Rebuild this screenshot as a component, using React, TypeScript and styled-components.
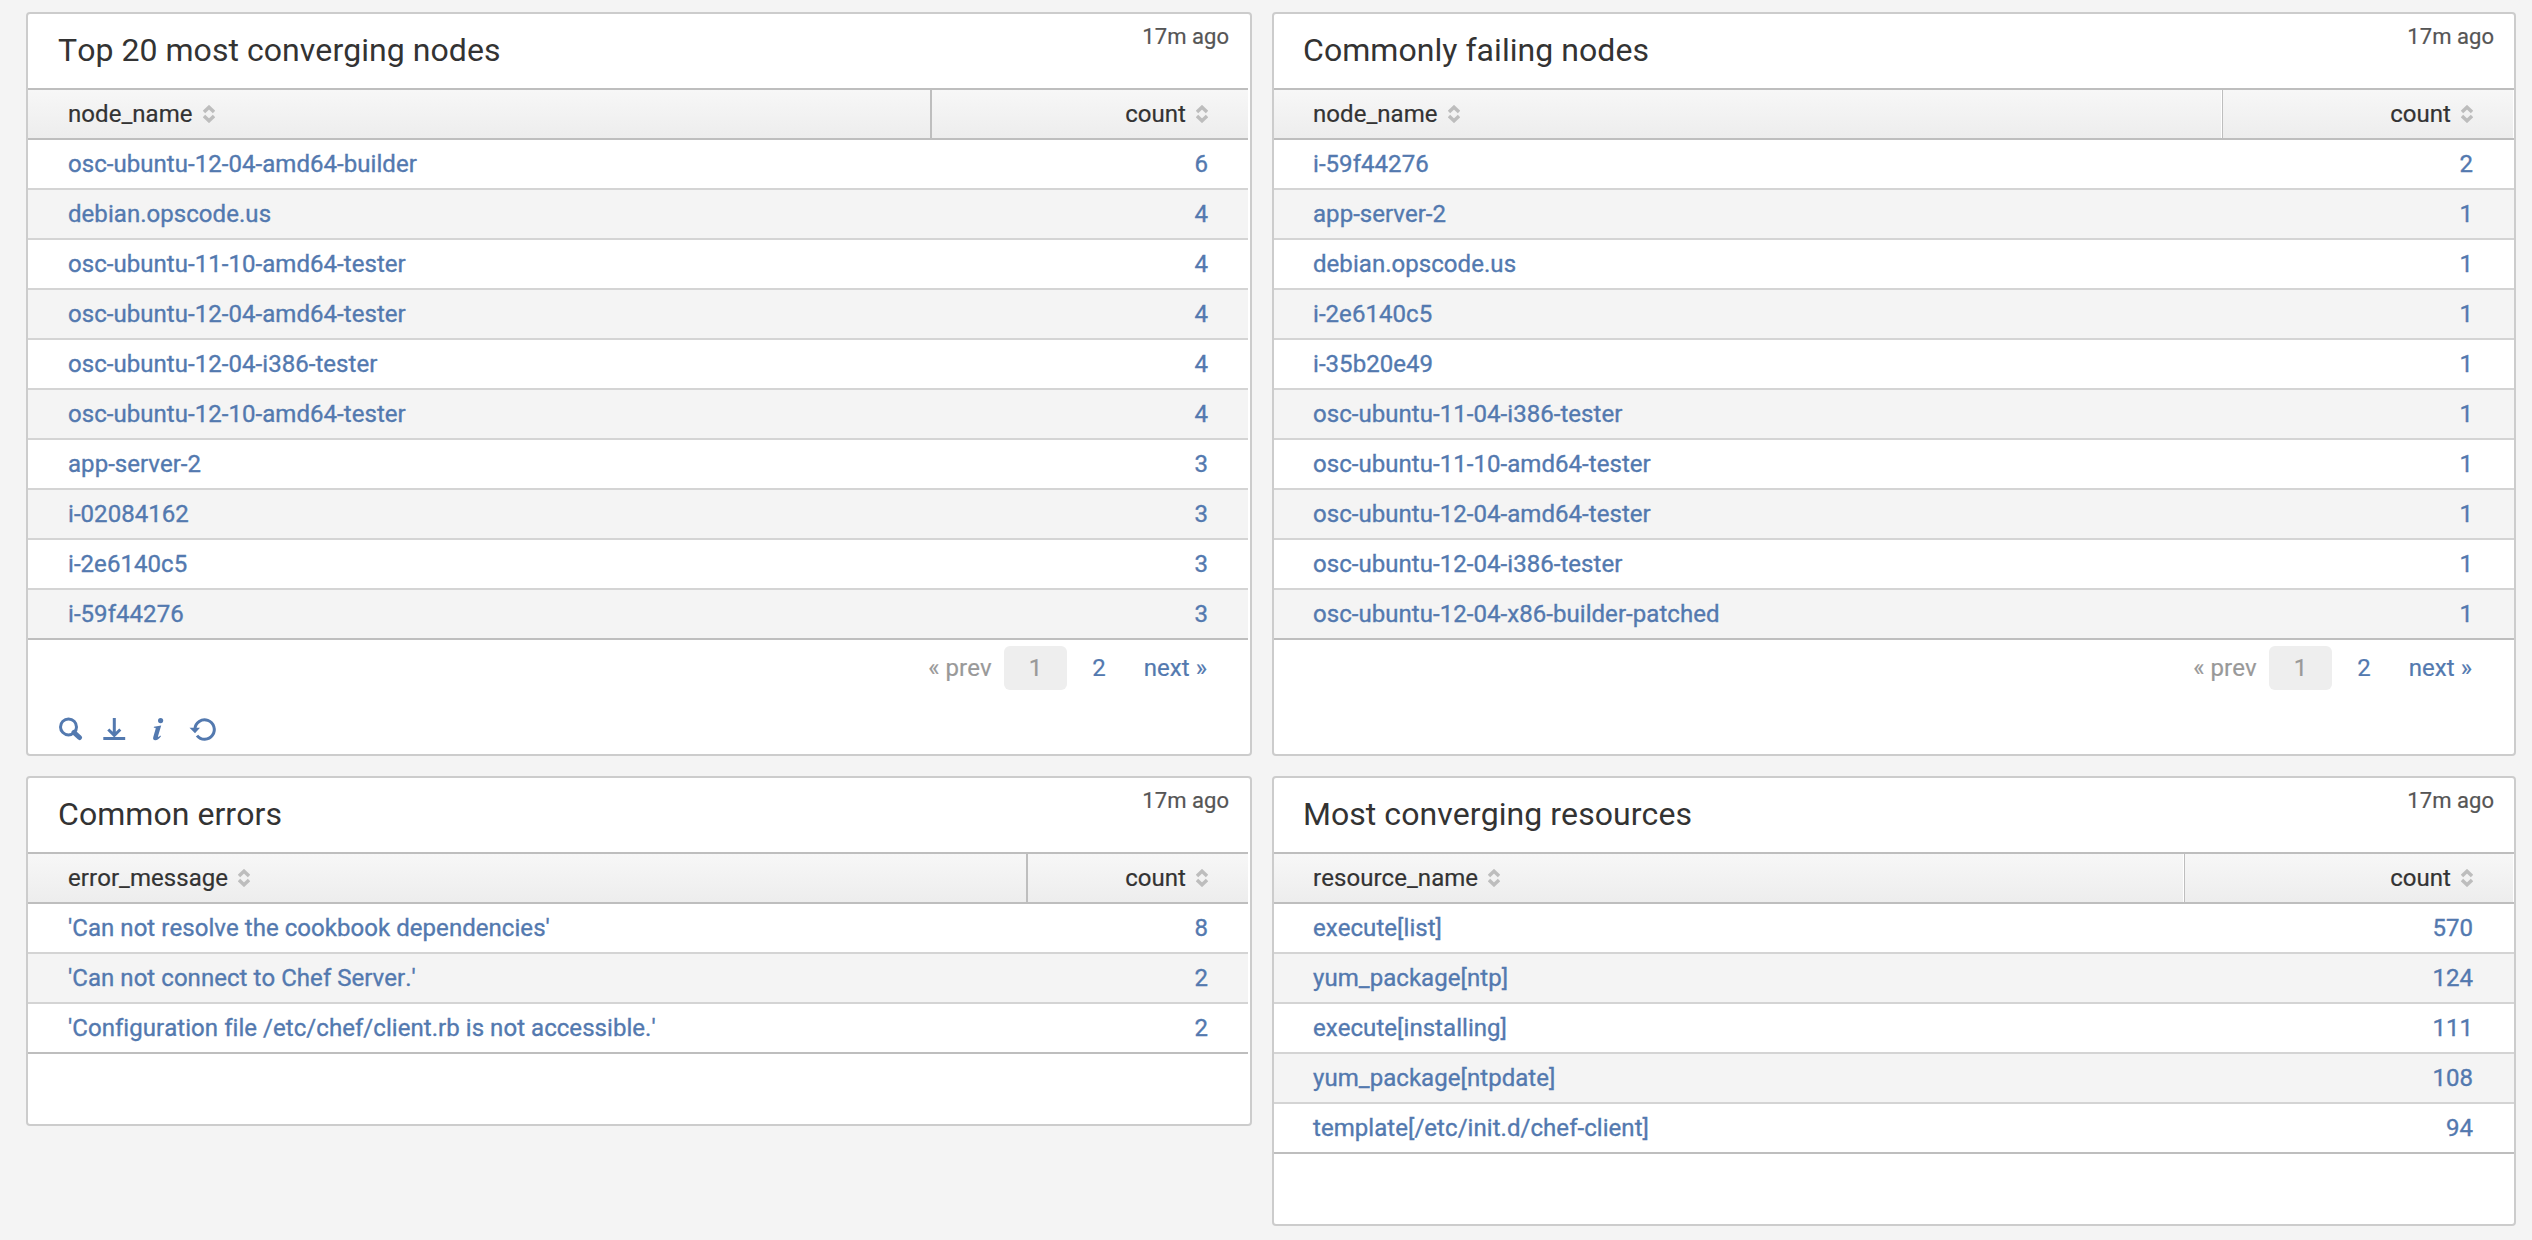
import React from "react";
import styled, { createGlobalStyle } from "styled-components";

const GlobalStyle = createGlobalStyle`
  * { box-sizing: border-box; }
  body {
    margin: 0;
    background: #f4f4f4;
    font-family: Roboto, "Liberation Sans", sans-serif;
    font-size: 24px;
    font-kerning: none;
    font-variant-ligatures: none;
    letter-spacing: 0.05px;
    -webkit-text-stroke: 0.2px currentColor;
    color: #333;
  }
`;

const Dashboard = styled.main`
  display: flex;
  align-items: flex-start;
  gap: 20px;
  min-height: 1240px;
  padding: 12px 16px 14px 26px;
`;

const Column = styled.div<{ $width: number }>`
  display: flex;
  flex-direction: column;
  flex: 0 0 ${(p) => p.$width}px;
  gap: 20px;
`;

const Panel = styled.section<{ $height: number; $inset: number }>`
  display: flex;
  flex-direction: column;
  height: ${(p) => p.$height}px;
  padding-right: ${(p) => p.$inset}px;
  background: #fff;
  border: 2px solid #ccc;
  border-radius: 4px;
`;

const PanelHead = styled.header<{ $left?: boolean }>`
  display: flex;
  justify-content: space-between;
  align-items: flex-start;
  height: 74px;
  padding: 0 ${(p) => (p.$left ? 19 : 20)}px 0 ${(p) => (p.$left ? 30 : 29)}px;
`;

const Title = styled.h2`
  margin: 0;
  padding-top: 16px;
  font-size: 32px;
  font-weight: 400;
  line-height: 40px;
  -webkit-text-stroke: 0;
`;

const Age = styled.span`
  padding-top: 10px;
  font-size: 22px;
  line-height: 26px;
  color: #555;
`;

const Table = styled.div`
  display: flex;
  flex-direction: column;
  border-top: 2px solid #bebebe;
  border-bottom: 2px solid #bebebe;
`;

const HeadRow = styled.div`
  display: flex;
  height: 50px;
  border-bottom: 2px solid #bebebe;
  background: linear-gradient(#f7f7f7, #ededed);
`;

const HeadCell = styled.div<{ $width?: number; $left?: boolean }>`
  display: flex;
  align-items: center;
  gap: 10px;
  flex: ${(p) => (p.$width ? `0 0 ${p.$width}px` : "1")};
  justify-content: ${(p) => (p.$width ? "flex-end" : "flex-start")};
  padding: 0 ${(p) => (p.$left ? 40 : 41)}px 0 ${(p) => (p.$left ? 40 : 39)}px;
  border-left: ${(p) => (p.$width ? `${p.$left ? 2 : 1}px solid #bebebe` : "0")};
  box-shadow: ${(p) => (p.$left ? "none" : "inset -1px 0 #fff")};
`;

const Row = styled.div<{ $left?: boolean }>`
  display: flex;
  justify-content: space-between;
  height: 50px;
  padding: 0 ${(p) => (p.$left ? 40 : 41)}px 0 ${(p) => (p.$left ? 40 : 39)}px;
  line-height: 48px;
  color: #5379af;
  -webkit-text-stroke: 0.35px currentColor;
  border-bottom: 2px solid #d4d4d4;

  &:nth-child(odd) { background: #f4f4f4; }
  &:last-child { height: 48px; border-bottom: 0; }
`;

const Pager = styled.nav<{ $left?: boolean }>`
  display: flex;
  justify-content: flex-end;
  align-items: center;
  height: 44px;
  margin-top: 6px;
  padding-right: ${(p) => (p.$left ? 28 : 29)}px;
`;

const PageItem = styled.span<{ $state?: "current" | "disabled"; $pad: number }>`
  height: 44px;
  padding: 0 ${(p) => p.$pad}px;
  line-height: 44px;
  border-radius: 6px;
  color: ${(p) => (p.$state ? "#999" : "#5379af")};
  background: ${(p) => (p.$state === "current" ? "#eee" : "transparent")};
`;

const Tools = styled.div`
  display: flex;
  margin-top: 27px;
  padding-left: 30px;
`;

const SortIcon = () => (
  <svg width="12" height="18" viewBox="0 0 12 18" fill="none" stroke="#bdbdbd" strokeWidth="3.400">
    <path d="M1 7 6 2.200l5 4.800M1 11l5 4.800 5-4.800" />
  </svg>
);

const ToolIcons = () => (
  <svg width="160" height="24" viewBox="0 0 160 24" fill="none" stroke="#5379af">
    <circle cx="10.500" cy="9.900" r="8" strokeWidth="3" />
    <path d="M16 15.500 21.500 20.500" strokeWidth="5" strokeLinecap="round" />
    <path d="M56.300 1V18M50.300 12.500 56.300 18.300l6-5.800" strokeWidth="3" />
    <path d="M45.300 21.500H67.200" strokeWidth="3" />
    <circle cx="102.600" cy="3.600" r="2.600" fill="#5379af" stroke="none" />
    <path d="M96 9.800 103.200 8.400 100 19.300C99.700 20.500 100.700 20.300 102.200 18.600L103 19.300C101 22.200 99.300 23.200 97.400 23.200C95.300 23.200 94.700 21.900 95.300 20L97.600 12C97.900 10.900 97.400 10.800 95.800 10.900Z" fill="#5379af" stroke="none" />
    <path d="M136.900 12A9.700 9.700 0 1 1 139 18.600" strokeWidth="3" />
    <path d="M131.500 10.800H142L137 16.300Z" fill="#5379af" stroke="none" />
  </svg>
);

type PanelData = {
  title: string;
  field: string;
  rows: [string, number][];
  height: number;
  countWidth: number;
  left?: boolean;
  paged?: boolean;
  tools?: boolean;
};

const leftPanels: PanelData[] = [
  {
    title: "Top 20 most converging nodes",
    field: "node_name",
    height: 744,
    countWidth: 318,
    left: true,
    paged: true,
    tools: true,
    rows: [
      ["osc-ubuntu-12-04-amd64-builder", 6],
      ["debian.opscode.us", 4],
      ["osc-ubuntu-11-10-amd64-tester", 4],
      ["osc-ubuntu-12-04-amd64-tester", 4],
      ["osc-ubuntu-12-04-i386-tester", 4],
      ["osc-ubuntu-12-10-amd64-tester", 4],
      ["app-server-2", 3],
      ["i-02084162", 3],
      ["i-2e6140c5", 3],
      ["i-59f44276", 3],
    ],
  },
  {
    title: "Common errors",
    field: "error_message",
    height: 350,
    countWidth: 222,
    left: true,
    rows: [
      ["'Can not resolve the cookbook dependencies'", 8],
      ["'Can not connect to Chef Server.'", 2],
      ["'Configuration file /etc/chef/client.rb is not accessible.'", 2],
    ],
  },
];

const rightPanels: PanelData[] = [
  {
    title: "Commonly failing nodes",
    field: "node_name",
    height: 744,
    countWidth: 292,
    paged: true,
    rows: [
      ["i-59f44276", 2],
      ["app-server-2", 1],
      ["debian.opscode.us", 1],
      ["i-2e6140c5", 1],
      ["i-35b20e49", 1],
      ["osc-ubuntu-11-04-i386-tester", 1],
      ["osc-ubuntu-11-10-amd64-tester", 1],
      ["osc-ubuntu-12-04-amd64-tester", 1],
      ["osc-ubuntu-12-04-i386-tester", 1],
      ["osc-ubuntu-12-04-x86-builder-patched", 1],
    ],
  },
  {
    title: "Most converging resources",
    field: "resource_name",
    height: 450,
    countWidth: 330,
    rows: [
      ["execute[list]", 570],
      ["yum_package[ntp]", 124],
      ["execute[installing]", 111],
      ["yum_package[ntpdate]", 108],
      ["template[/etc/init.d/chef-client]", 94],
    ],
  },
];

const ResultPanel = ({ data }: { data: PanelData }) => (
  <Panel $height={data.height} $inset={data.left ? 2 : 0}>
    <PanelHead $left={data.left}>
      <Title>{data.title}</Title>
      <Age>17m ago</Age>
    </PanelHead>
    <Table>
      <HeadRow>
        <HeadCell $left={data.left}>
          <span>{data.field}</span>
          <SortIcon />
        </HeadCell>
        <HeadCell $width={data.countWidth} $left={data.left}>
          <span>count</span>
          <SortIcon />
        </HeadCell>
      </HeadRow>
      {data.rows.map(([name, count]) => (
        <Row key={name} $left={data.left}>
          <span>{name}</span>
          <span>{count}</span>
        </Row>
      ))}
    </Table>
    {data.paged && (
      <Pager $left={data.left}>
        <PageItem $state="disabled" $pad={12}>« prev</PageItem>
        <PageItem $state="current" $pad={25}>1</PageItem>
        <PageItem $pad={25}>2</PageItem>
        <PageItem $pad={13}>next »</PageItem>
      </Pager>
    )}
    {data.tools && (
      <Tools>
        <ToolIcons />
      </Tools>
    )}
  </Panel>
);

export default function App() {
  return (
    <>
      <GlobalStyle />
      <Dashboard>
        <Column $width={1226}>
          {leftPanels.map((p) => <ResultPanel key={p.title} data={p} />)}
        </Column>
        <Column $width={1244}>
          {rightPanels.map((p) => <ResultPanel key={p.title} data={p} />)}
        </Column>
      </Dashboard>
    </>
  );
}
